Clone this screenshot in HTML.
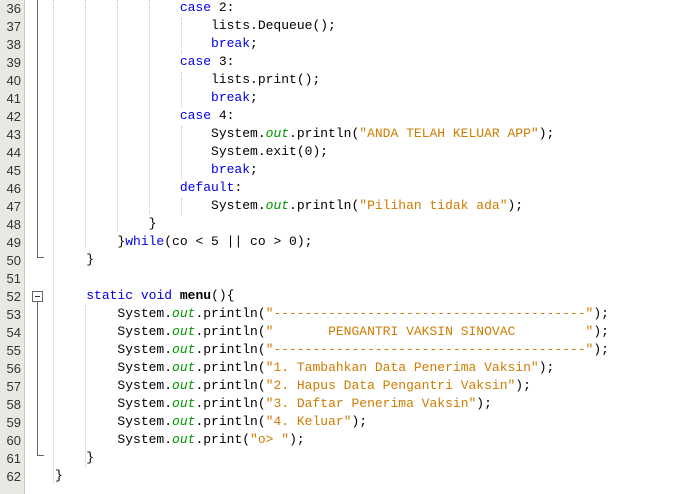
<!DOCTYPE html>
<html><head><meta charset="utf-8"><style>
html,body{margin:0;padding:0;width:679px;height:494px;overflow:hidden;background:#fff;}
.g{position:absolute;left:0;top:0;width:24px;height:494px;background:#e9e8e2;border-right:1px solid #c8c8c0;}
.n{position:absolute;left:0;width:21px;text-align:right;font:13px "Liberation Sans",sans-serif;color:#333;}
pre{position:absolute;left:55px;top:-1px;margin:0;font:13px/18px "Liberation Mono",monospace;color:#000;}
.k{color:#0000e6}.o{color:#009900;font-style:italic}.s{color:#ce7b00}.b{font-weight:bold}
.gd{position:absolute;width:0;border-left:1px dotted #c8c8c8;}
.fl{position:absolute;background:#666;}
</style></head><body>
<div class="g"></div>
<div class="gd" style="left:53px;top:0;height:484px"></div>
<div class="gd" style="left:85px;top:0;height:250px"></div>
<div class="gd" style="left:85px;top:305px;height:162px"></div>
<div class="gd" style="left:117px;top:0;height:232px"></div>
<div class="gd" style="left:149px;top:0;height:214px"></div>
<div class="gd" style="left:181px;top:18px;height:36px"></div>
<div class="gd" style="left:181px;top:72px;height:36px"></div>
<div class="gd" style="left:181px;top:126px;height:54px"></div>
<div class="gd" style="left:181px;top:198px;height:18px"></div>
<div class="fl" style="left:37px;top:0;width:1px;height:258px"></div>
<div class="fl" style="left:37px;top:257px;width:7px;height:1px"></div>
<div style="position:absolute;left:32px;top:291px;width:9px;height:9px;border:1px solid #666;background:#fff"></div>
<div style="position:absolute;left:35px;top:296px;width:5px;height:1px;background:#333"></div>
<div class="fl" style="left:37px;top:302px;width:1px;height:154px"></div>
<div class="fl" style="left:37px;top:455px;width:7px;height:1px"></div>
<pre>                <span class="k">case</span> 2:
                    lists.Dequeue();
                    <span class="k">break</span>;
                <span class="k">case</span> 3:
                    lists.print();
                    <span class="k">break</span>;
                <span class="k">case</span> 4:
                    System.<span class="o">out</span>.println(<span class="s">"ANDA TELAH KELUAR APP"</span>);
                    System.exit(0);
                    <span class="k">break</span>;
                <span class="k">default</span>:
                    System.<span class="o">out</span>.println(<span class="s">"Pilihan tidak ada"</span>);
            }
        }<span class="k">while</span>(co &lt; 5 || co &gt; 0);
    }

    <span class="k">static</span> <span class="k">void</span> <span class="b">menu</span>(){
        System.<span class="o">out</span>.println(<span class="s">"----------------------------------------"</span>);
        System.<span class="o">out</span>.println(<span class="s">"       PENGANTRI VAKSIN SINOVAC         "</span>);
        System.<span class="o">out</span>.println(<span class="s">"----------------------------------------"</span>);
        System.<span class="o">out</span>.println(<span class="s">"1. Tambahkan Data Penerima Vaksin"</span>);
        System.<span class="o">out</span>.println(<span class="s">"2. Hapus Data Pengantri Vaksin"</span>);
        System.<span class="o">out</span>.println(<span class="s">"3. Daftar Penerima Vaksin"</span>);
        System.<span class="o">out</span>.println(<span class="s">"4. Keluar"</span>);
        System.<span class="o">out</span>.print(<span class="s">"o&gt; "</span>);
    }
}</pre>
<div class="n" style="top:1px">36</div><div class="n" style="top:19px">37</div><div class="n" style="top:37px">38</div><div class="n" style="top:55px">39</div><div class="n" style="top:73px">40</div><div class="n" style="top:91px">41</div><div class="n" style="top:109px">42</div><div class="n" style="top:127px">43</div><div class="n" style="top:145px">44</div><div class="n" style="top:163px">45</div><div class="n" style="top:181px">46</div><div class="n" style="top:199px">47</div><div class="n" style="top:217px">48</div><div class="n" style="top:235px">49</div><div class="n" style="top:253px">50</div><div class="n" style="top:271px">51</div><div class="n" style="top:289px">52</div><div class="n" style="top:307px">53</div><div class="n" style="top:325px">54</div><div class="n" style="top:343px">55</div><div class="n" style="top:361px">56</div><div class="n" style="top:379px">57</div><div class="n" style="top:397px">58</div><div class="n" style="top:415px">59</div><div class="n" style="top:433px">60</div><div class="n" style="top:451px">61</div><div class="n" style="top:469px">62</div>
</body></html>
